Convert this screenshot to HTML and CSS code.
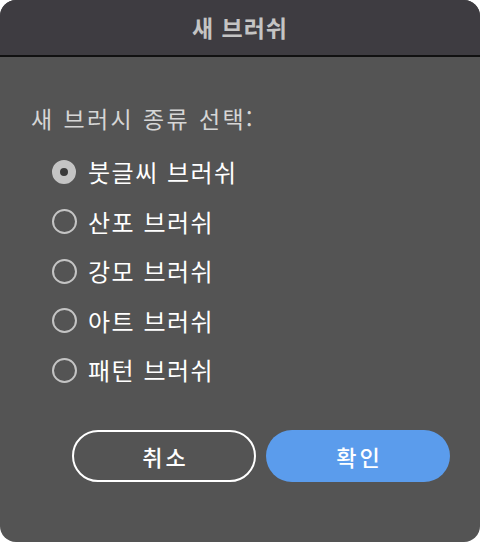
FILE: index.html
```html
<!DOCTYPE html>
<html lang="ko">
<head>
<meta charset="utf-8">
<link rel="stylesheet" href="styles.css">
</head>
<body>
<div class="dialog">
  <div class="header">새 브러쉬</div>
  <div class="content">
    <div class="label">새 브러시 종류 선택:</div>
    <ul class="options">
      <li class="option"><span class="radio checked"></span><span class="opt-text">붓글씨 브러쉬</span></li>
      <li class="option"><span class="radio"></span><span class="opt-text">산포 브러쉬</span></li>
      <li class="option"><span class="radio"></span><span class="opt-text">강모 브러쉬</span></li>
      <li class="option"><span class="radio"></span><span class="opt-text">아트 브러쉬</span></li>
      <li class="option"><span class="radio"></span><span class="opt-text">패턴 브러쉬</span></li>
    </ul>
    <div class="buttons">
      <button class="btn cancel">취소</button>
      <button class="btn ok">확인</button>
    </div>
  </div>
</div>
</body>
</html>
```

FILE: styles.css
```css
html, body {
  margin: 0;
  padding: 0;
  background: #ffffff;
}
body {
  width: 480px;
  height: 542px;
  font-family: "Noto Sans CJK KR", "Noto Sans", sans-serif;
}
.dialog {
  width: 480px;
  height: 542px;
  border-radius: 16px;
  overflow: hidden;
  background: #545454;
  display: flex;
  flex-direction: column;
}
.header {
  flex: none;
  background: #3e3c41;
  border-bottom: 2px solid #111111;
  color: #c4c4c4;
  font-weight: 700;
  font-size: 23px;
  letter-spacing: 1px;
  display: flex;
  align-items: center;
  justify-content: center;
  box-sizing: border-box;
  height: 57px;
  padding-bottom: 2px;
}
.content {
  padding: 46px 0 0 31px;
}
.label {
  color: #d6d6d6;
  font-size: 23px;
  letter-spacing: 2.4px;
  line-height: 30px;
}
.options {
  list-style: none;
  margin: 24px 0 0 21px;
  padding: 0;
  display: flex;
  flex-direction: column;
  gap: 19.5px;
}
.option {
  display: flex;
  align-items: center;
  height: 30px;
  gap: 11px;
}
.radio {
  width: 25px;
  height: 25px;
  box-sizing: border-box;
  border-radius: 50%;
  border: 2px solid #c4c4c4;
  flex: none;
}
.radio.checked {
  width: 24px;
  height: 24px;
  border: 8px solid #c4c4c4;
  background: #3a3a3a;
  margin-right: 1px;
}
.opt-text {
  color: #ffffff;
  font-size: 24px;
  line-height: 30px;
  letter-spacing: 1.5px;
}
.buttons {
  display: flex;
  gap: 10px;
  margin: 45px 0 0 41px;
}
.btn {
  width: 184px;
  height: 52px;
  border-radius: 26px;
  font-family: inherit;
  font-size: 22px;
  font-weight: 500;
  letter-spacing: 3px;
  text-indent: 3px;
  color: #ffffff;
  cursor: pointer;
  box-sizing: border-box;
}
.cancel {
  background: transparent;
  border: 2px solid #ffffff;
}
.ok {
  background: #5b9cec;
  border: none;
}
```
